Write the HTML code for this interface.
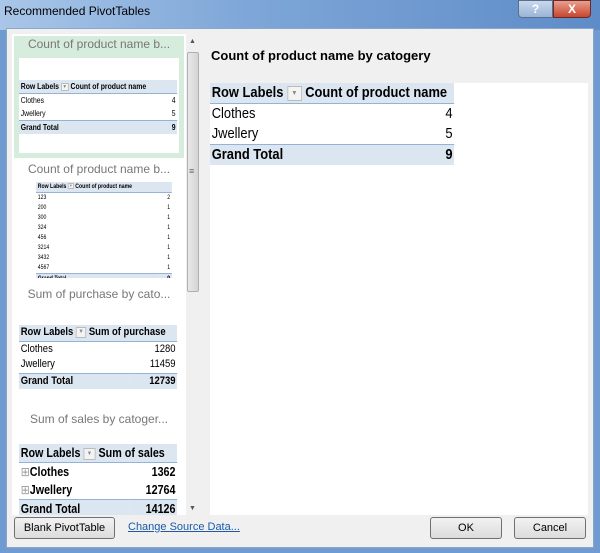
<!DOCTYPE html>
<html><head><style>
*{margin:0;padding:0;box-sizing:border-box}
body{width:600px;height:553px;overflow:hidden;font-family:"Liberation Sans",sans-serif;background:#6f9bd0;position:relative}
.a{position:absolute}
.t{border-collapse:collapse;table-layout:fixed;font-family:"Liberation Sans",sans-serif;transform:scaleX(0.86);transform-origin:0 0}
.t td{padding:0 2px;white-space:nowrap;overflow:hidden}
.h td{background:#dce6f1;font-weight:bold;border-bottom:1px solid #95b3d7}
.g td{background:#dce6f1;font-weight:bold;border-top:1px solid #95b3d7}
.r{text-align:right}
.dd{display:inline-block;border:1px solid #bbb;background:#f3f3f3;color:#888;text-align:center;vertical-align:middle}
.btn{position:absolute;border:1px solid #707070;border-radius:3px;background:linear-gradient(#f2f2f2,#dcdcdc);font-size:11px;text-align:center;color:#000}
.cap{position:absolute;color:#777;text-align:center;font-size:12px}
</style></head><body>
<div class="a" style="left:0;top:0;width:600px;height:30px;background:linear-gradient(90deg,#a9c6e8,#7fa7d8 40%,#5e8cc8)"></div>
<div class="a" style="left:4px;top:4px;font-size:12px;color:#000">Recommended PivotTables</div>
<div class="a" style="left:518px;top:0;width:35px;height:18px;border:1px solid #5a6f8c;border-radius:0 0 0 4px;background:linear-gradient(#c9d8ec,#9bb4d6);color:#fff;font-size:12px;font-weight:bold;text-align:center;line-height:16px">?</div>
<div class="a" style="left:553px;top:0;width:38px;height:18px;border:1px solid #6b2a2a;border-radius:0 0 4px 0;background:linear-gradient(#e8a08e,#c8452f);color:#fff;font-size:12px;font-weight:bold;text-align:center;line-height:16px">X</div>
<div class="a" style="left:6px;top:28px;width:588px;height:520px;background:#f0f0f0;border:1px solid #8aa6c8"></div>
<!-- left panel -->
<div class="a" style="left:12px;top:34px;width:174px;height:481px;background:#fff;overflow:hidden">
 <div class="a" style="left:2px;top:2px;width:170px;height:122px;background:#d6ecdc"></div>
 <div class="a" style="left:7px;top:24px;width:160px;height:95px;background:#fff"></div>
 <div class="cap" style="left:0;top:3px;width:174px">Count of product name b...</div>
 <table class="t a" style="left:7px;top:46px;width:184px;font-size:8px;line-height:13px">
  <col style="width:164px"><col style="width:20px">
  <tr class="h"><td colspan="2">Row Labels <span class="dd" style="width:9px;height:8px;font-size:5px;line-height:6px">▼</span> Count of product name</td></tr>
  <tr><td>Clothes</td><td class="r">4</td></tr>
  <tr><td>Jwellery</td><td class="r">5</td></tr>
  <tr class="g"><td>Grand Total</td><td class="r">9</td></tr>
 </table>
 <div class="cap" style="left:0;top:128px;width:174px">Count of product name b...</div>
 <table class="t a" style="left:24px;top:148px;width:158px;font-size:6px;line-height:10px">
  <col style="width:142px"><col style="width:16px">
  <tr class="h"><td colspan="2">Row Labels <span class="dd" style="width:7px;height:6px;font-size:4px;line-height:4px">▼</span> Count of product name</td></tr>
  <tr><td>123</td><td class="r">2</td></tr><tr><td>200</td><td class="r">1</td></tr><tr><td>300</td><td class="r">1</td></tr><tr><td>324</td><td class="r">1</td></tr><tr><td>456</td><td class="r">1</td></tr><tr><td>3214</td><td class="r">1</td></tr><tr><td>3432</td><td class="r">1</td></tr><tr><td>4567</td><td class="r">1</td></tr>
  <tr class="g"><td>Grand Total</td><td class="r">9</td></tr>
 </table>
 <div class="a" style="left:0;top:244px;width:174px;height:240px;background:#fff"></div>
 <div class="cap" style="left:0;top:253px;width:174px">Sum of purchase by cato...</div>
 <table class="t a" style="left:7px;top:291px;width:184px;font-size:11px;line-height:15.5px">
  <col style="width:128px"><col style="width:56px">
  <tr class="h"><td colspan="2">Row Labels <span class="dd" style="width:12px;height:11px;font-size:6px;line-height:9px">▼</span> Sum of purchase</td></tr>
  <tr><td>Clothes</td><td class="r">1280</td></tr>
  <tr><td>Jwellery</td><td class="r">11459</td></tr>
  <tr class="g"><td>Grand Total</td><td class="r">12739</td></tr>
 </table>
 <div class="cap" style="left:0;top:378px;width:174px">Sum of sales by catoger...</div>
 <table class="t a" style="left:7px;top:410px;width:184px;font-size:12.5px;line-height:18px">
  <col style="width:128px"><col style="width:56px">
  <tr class="h"><td colspan="2">Row Labels <span class="dd" style="width:14px;height:12px;font-size:6px;line-height:10px">▼</span> Sum of sales</td></tr>
  <tr style="font-weight:bold"><td><span style="color:#999;font-weight:normal">⊞</span>Clothes</td><td class="r">1362</td></tr>
  <tr style="font-weight:bold"><td><span style="color:#999;font-weight:normal">⊞</span>Jwellery</td><td class="r">12764</td></tr>
  <tr class="g"><td>Grand Total</td><td class="r">14126</td></tr>
 </table>
</div>
<!-- scrollbar -->
<div class="a" style="left:186px;top:34px;width:14px;height:481px;background:#f0f0f0"></div>
<div class="a" style="left:189px;top:38px;font-size:7px;color:#555">▲</div>
<div class="a" style="left:189px;top:505px;font-size:7px;color:#555">▼</div>
<div class="a" style="left:187px;top:52px;width:12px;height:240px;border:1px solid #b0b0b0;border-radius:2px;background:linear-gradient(90deg,#e8e8e8,#d4d4d4)"></div>
<div class="a" style="left:189px;top:166px;font-size:9px;color:#666">≡</div>
<!-- right -->
<div class="a" style="left:211px;top:48px;font-size:13px;font-weight:bold">Count of product name by catogery</div>
<div class="a" style="left:210px;top:83px;width:378px;height:432px;background:#fff"></div>
<table class="t a" style="left:210px;top:83px;width:284px;font-size:15px;line-height:20px">
 <col style="width:268px"><col style="width:16px">
 <tr class="h"><td colspan="2">Row Labels <span class="dd" style="width:17px;height:15px;font-size:7px;line-height:13px">▼</span> Count of product name</td></tr>
 <tr><td>Clothes</td><td class="r">4</td></tr>
 <tr><td>Jwellery</td><td class="r">5</td></tr>
 <tr class="g"><td>Grand Total</td><td class="r">9</td></tr>
</table>
<!-- buttons -->
<div class="btn" style="left:14px;top:517px;width:101px;height:22px;line-height:20px">Blank PivotTable</div>
<div class="a" style="left:128px;top:521px;font-size:11px;color:#1b5aa8;text-decoration:underline">Change Source Data...</div>
<div class="btn" style="left:430px;top:517px;width:72px;height:22px;line-height:20px">OK</div>
<div class="btn" style="left:514px;top:517px;width:72px;height:22px;line-height:20px">Cancel</div>
</body></html>
